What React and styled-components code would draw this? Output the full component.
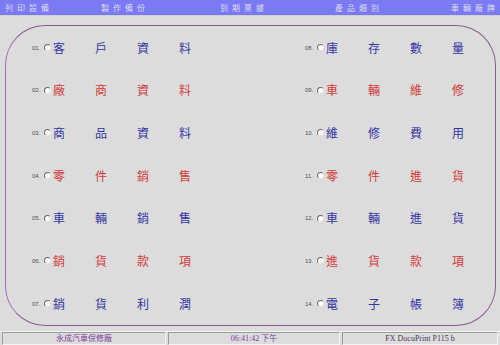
import React from 'react';
import styled, { createGlobalStyle } from 'styled-components';

const GlobalStyle = createGlobalStyle`
  html, body {
    margin: 0;
    padding: 0;
    background: #dcdcdc;
  }
  body {
    font-family: "Noto Sans CJK TC", "Liberation Sans", sans-serif;
  }
`;

const menu = ['列印設備', '製作備份', '到期票據', '產品類別', '車輛廠牌'];

const rows = [
  ['01.', '客戶資料', 'blue', '08.', '庫存數量', 'blue'],
  ['02.', '廠商資料', 'red', '09.', '車輛維修', 'red'],
  ['03.', '商品資料', 'blue', '10.', '維修費用', 'blue'],
  ['04.', '零件銷售', 'red', '11.', '零件進貨', 'red'],
  ['05.', '車輛銷售', 'blue', '12.', '車輛進貨', 'blue'],
  ['06.', '銷貨款項', 'red', '13.', '進貨款項', 'red'],
  ['07.', '銷貨利潤', 'blue', '14.', '電子帳簿', 'blue'],
];

const Entry = ({ num, label, tone }) => (
  <Item>
    <Num>{num}</Num>
    <Radio />
    <Label tone={tone}>
      {label.split('').map((c, i) => <Char key={i}>{c}</Char>)}
    </Label>
  </Item>
);

export default function App() {
  return (
    <Screen>
      <GlobalStyle />
      <TopBar>
        {menu.map((m) => <MenuItem key={m}>{m}</MenuItem>)}
      </TopBar>
      <Strip />
      <Main>
        <Frame>
          <Grid>
            {rows.map((r) => (
              <React.Fragment key={r[0]}>
                <Entry num={r[0]} label={r[1]} tone={r[2]} />
                <Entry num={r[3]} label={r[4]} tone={r[5]} />
              </React.Fragment>
            ))}
          </Grid>
        </Frame>
      </Main>
      <StatusBar>
        <Panel width="164px" color="#7a3f9a">永成汽車保修廠</Panel>
        <Panel width="172px" color="#7a3f9a">06:41:42 下午</Panel>
        <Panel width="auto" color="#4a3a5a">FX DocuPrint P115 b</Panel>
      </StatusBar>
    </Screen>
  );
}

const Screen = styled.div`
  width: 500px;
  height: 345px;
  display: flex;
  flex-direction: column;
  background: #dcdcdc;
  overflow: hidden;
`;

const TopBar = styled.div`
  height: 15px;
  background: #7a7af2;
  display: grid;
  grid-template-columns: 96px 119px 115px 116px 1fr;
  align-items: center;
  padding-left: 5px;
`;

const MenuItem = styled.div`
  font-size: 8px;
  line-height: 15px;
  letter-spacing: 4px;
  color: #dcdcf6;
  white-space: nowrap;
`;

const Strip = styled.div`
  height: 2px;
  background: #e8e8ec;
  border-bottom: 1px solid #d0d0d8;
`;

const Main = styled.div`
  flex: 1;
  padding: 9px 4px 5px 5px;
  display: flex;
`;

const Frame = styled.div`
  flex: 1;
  border: 1px solid #8a5a8e;
  border-left-color: #a070b0;
  border-radius: 40px;
  box-sizing: border-box;
`;

const Grid = styled.div`
  display: grid;
  grid-template-columns: 273px 1fr;
  grid-auto-rows: 42.7px;
  padding-left: 26px;
`;

const Item = styled.div`
  display: flex;
  align-items: center;
`;

const Num = styled.span`
  font-family: "Liberation Sans", sans-serif;
  font-size: 6px;
  color: #505050;
  width: 11px;
  margin-right: 1px;
`;

const Radio = styled.span`
  width: 5px;
  height: 5px;
  border-radius: 50%;
  background: #ffffff;
  border: 1px solid;
  border-color: #6a6a6a #e4e4e4 #e4e4e4 #6a6a6a;
  margin-right: 2px;
`;

const Label = styled.span`
  display: flex;
  gap: 30px;
  font-size: 12px;
  line-height: 14px;
  color: ${(p) => (p.tone === 'red' ? '#d23a3a' : '#3434a4')};
`;

const Char = styled.span`
  width: 12px;
`;

const StatusBar = styled.div`
  height: 13px;
  display: flex;
  gap: 2px;
  padding: 0 2px;
  border-top: 1px solid #f4f4f4;
  background: #dcdcdc;
`;

const Panel = styled.div`
  width: ${(p) => p.width};
  flex: ${(p) => (p.width === 'auto' ? 1 : 'none')};
  box-sizing: border-box;
  border: 1px solid;
  border-color: #9a9a9a #f4f4f4 #f4f4f4 #9a9a9a;
  font-family: "Liberation Serif", "Noto Sans CJK TC", serif;
  font-size: 8px;
  line-height: 11px;
  text-align: center;
  color: ${(p) => p.color};
  white-space: nowrap;
`;
